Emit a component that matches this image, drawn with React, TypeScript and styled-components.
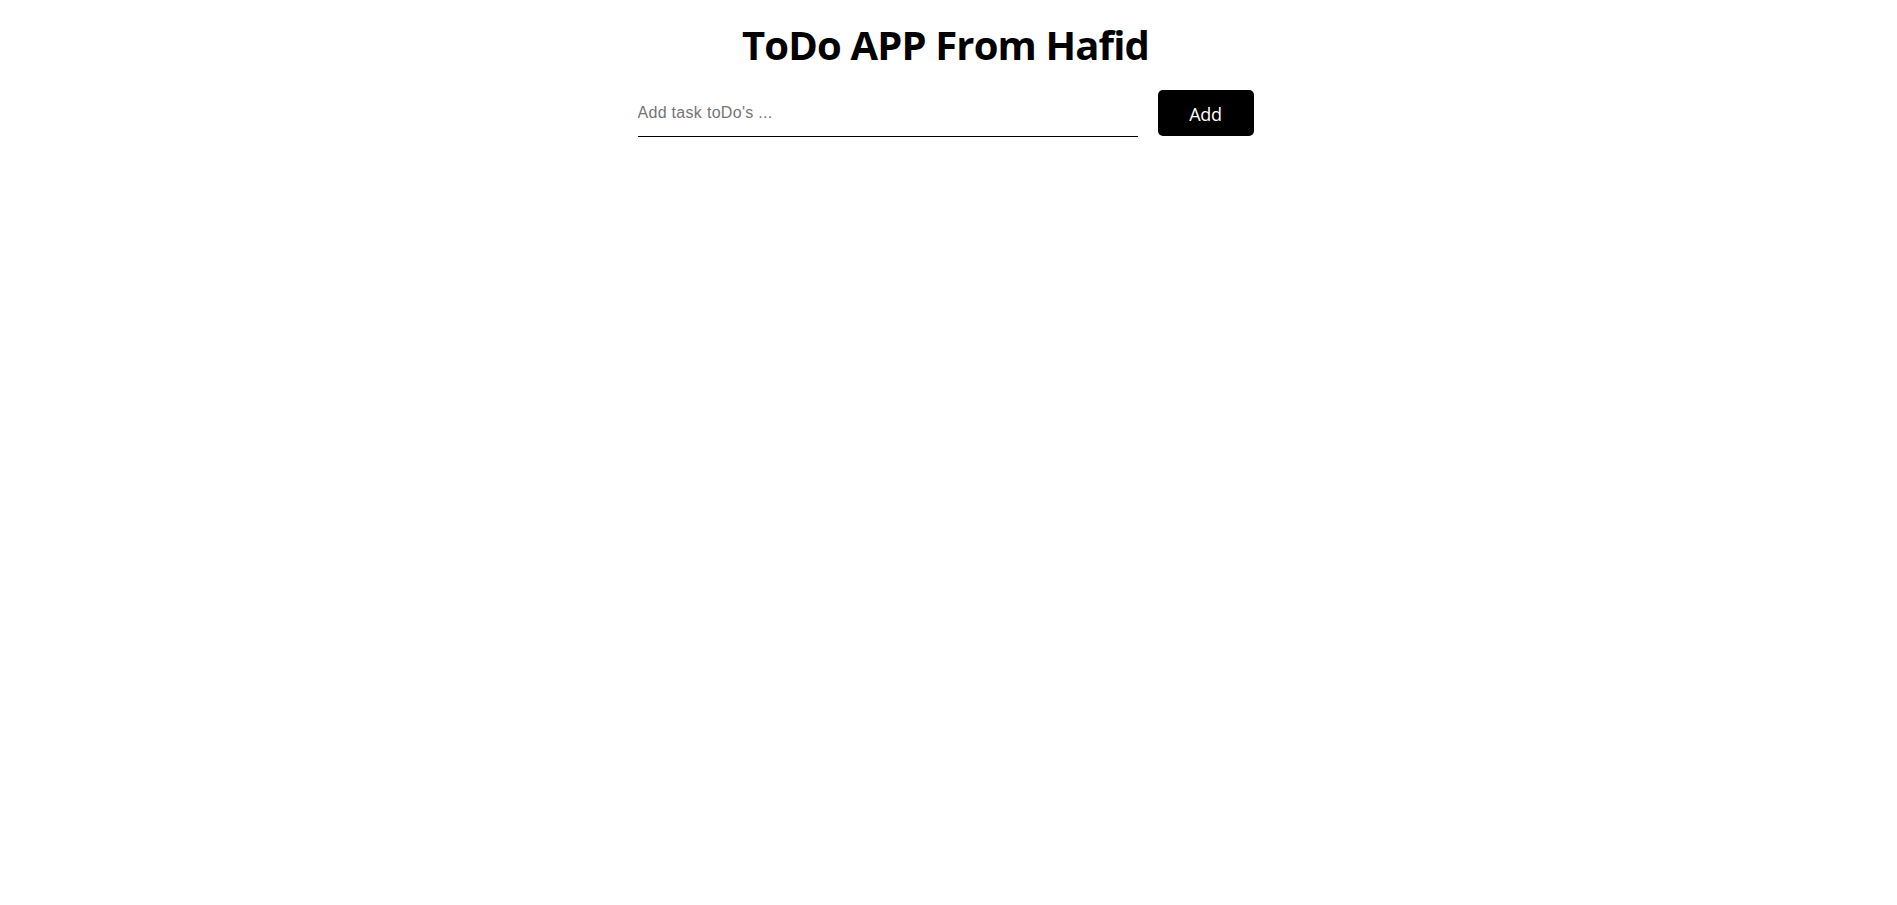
import React, { FC, useState } from "react";
import styled, { createGlobalStyle } from "styled-components";

const GlobalStyle = createGlobalStyle`
  html, body {
    margin: 0;
    padding: 0;
    background: #ffffff;
  }
  body {
    font-family: "Open Sans", "Noto Sans", sans-serif;
    color: #000000;
  }
`;

// page
const Page = styled.main`
  display: flex;
  flex-direction: column;
  align-items: center;
  padding: 17px 6px 0 0;
`;

const Title = styled.h1`
  margin: 0;
  font-family: "Open Sans", "Noto Sans", sans-serif;
  font-size: 40px;
  font-weight: 700;
  line-height: normal;
  letter-spacing: -0.85px;
  color: #000000;
`;

// form
const Form = styled.form`
  display: flex;
  align-items: flex-start;
  gap: 20px;
  margin-top: 18px;
`;

const TaskInput = styled.input`
  box-sizing: border-box;
  width: 500px;
  height: 47px;
  padding: 0;
  border: none;
  border-bottom: 1px solid #000000;
  outline: none;
  background: transparent;
  font-family: "Liberation Sans", Arial, sans-serif;
  font-size: 16px;
  letter-spacing: 0.3px;
  color: #000000;

  &::placeholder {
    color: #757575;
  }
`;

const AddButton = styled.button`
  box-sizing: border-box;
  width: 96px;
  height: 46px;
  padding: 2px 0 0;
  border: none;
  border-radius: 5px;
  background: #000000;
  color: #ffffff;
  font-family: "Open Sans", "Noto Sans", sans-serif;
  font-size: 18px;
  letter-spacing: -0.3px;
  cursor: pointer;
`;

const App: FC = () => {
  const [task, setTask] = useState("");

  return (
    <>
      <GlobalStyle />
      <Page>
        <Title>ToDo APP From Hafid</Title>
        <Form onSubmit={(e: React.FormEvent) => e.preventDefault()}>
          <TaskInput
            type="text"
            placeholder="Add task toDo's ..."
            value={task}
            onChange={(e) => setTask(e.target.value)}
          />
          <AddButton type="submit">Add</AddButton>
        </Form>
      </Page>
    </>
  );
};

export default App;
